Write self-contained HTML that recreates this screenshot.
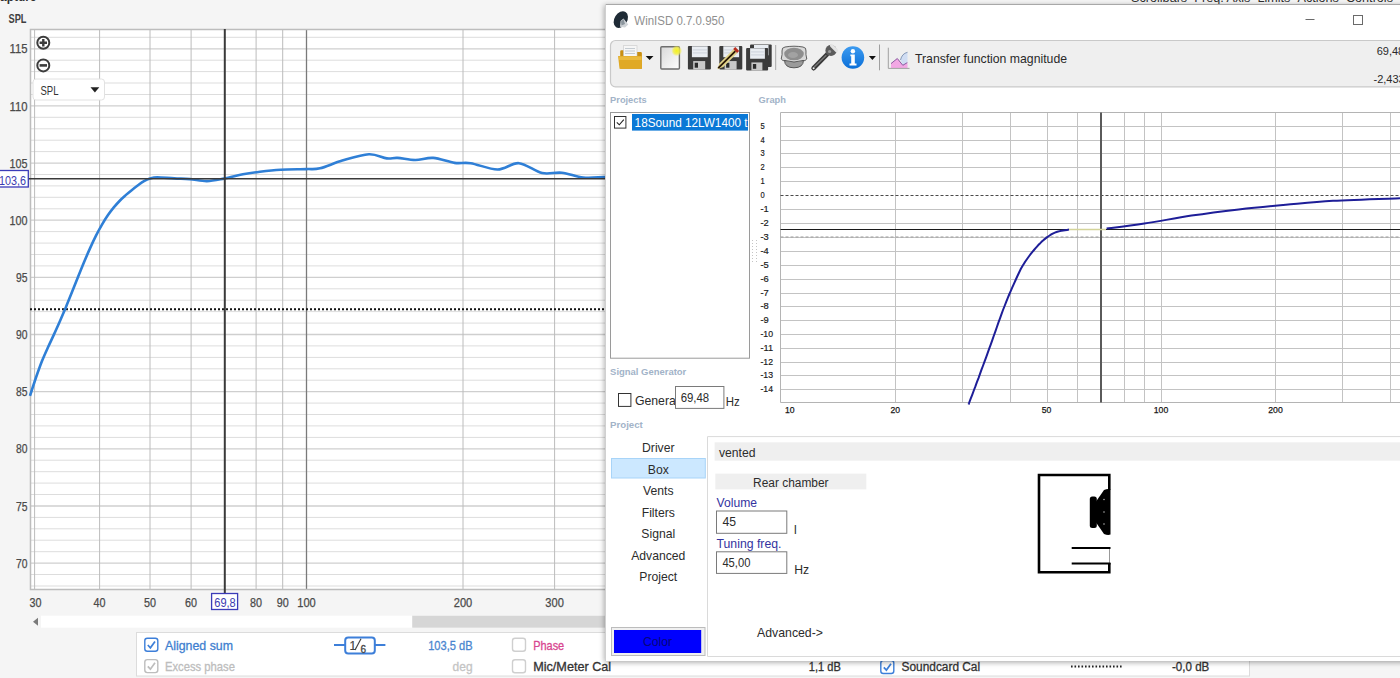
<!DOCTYPE html>
<html><head><meta charset="utf-8"><title>REW + WinISD</title>
<style>
html,body{margin:0;padding:0;width:1400px;height:678px;overflow:hidden;background:#f5f5f5;font-family:"Liberation Sans", sans-serif;}
svg text{font-family:"Liberation Sans", sans-serif;}
</style></head><body>
<svg id="rew" width="1400" height="678" viewBox="0 0 1400 678" style="position:absolute;left:0;top:0"><rect x="30" y="29" width="590" height="561" fill="#fff"/><line x1="30" x2="620" y1="586.0" y2="586.0" stroke="#dddddd" stroke-width="1"/><line x1="30" x2="620" y1="574.5" y2="574.5" stroke="#dddddd" stroke-width="1"/><line x1="30" x2="620" y1="563.1" y2="563.1" stroke="#cfcfcf" stroke-width="1.3"/><line x1="30" x2="620" y1="551.7" y2="551.7" stroke="#dddddd" stroke-width="1"/><line x1="30" x2="620" y1="540.2" y2="540.2" stroke="#dddddd" stroke-width="1"/><line x1="30" x2="620" y1="528.8" y2="528.8" stroke="#dddddd" stroke-width="1"/><line x1="30" x2="620" y1="517.4" y2="517.4" stroke="#dddddd" stroke-width="1"/><line x1="30" x2="620" y1="506.0" y2="506.0" stroke="#cfcfcf" stroke-width="1.3"/><line x1="30" x2="620" y1="494.5" y2="494.5" stroke="#dddddd" stroke-width="1"/><line x1="30" x2="620" y1="483.1" y2="483.1" stroke="#dddddd" stroke-width="1"/><line x1="30" x2="620" y1="471.7" y2="471.7" stroke="#dddddd" stroke-width="1"/><line x1="30" x2="620" y1="460.2" y2="460.2" stroke="#dddddd" stroke-width="1"/><line x1="30" x2="620" y1="448.8" y2="448.8" stroke="#cfcfcf" stroke-width="1.3"/><line x1="30" x2="620" y1="437.4" y2="437.4" stroke="#dddddd" stroke-width="1"/><line x1="30" x2="620" y1="425.9" y2="425.9" stroke="#dddddd" stroke-width="1"/><line x1="30" x2="620" y1="414.5" y2="414.5" stroke="#dddddd" stroke-width="1"/><line x1="30" x2="620" y1="403.1" y2="403.1" stroke="#dddddd" stroke-width="1"/><line x1="30" x2="620" y1="391.7" y2="391.7" stroke="#cfcfcf" stroke-width="1.3"/><line x1="30" x2="620" y1="380.2" y2="380.2" stroke="#dddddd" stroke-width="1"/><line x1="30" x2="620" y1="368.8" y2="368.8" stroke="#dddddd" stroke-width="1"/><line x1="30" x2="620" y1="357.4" y2="357.4" stroke="#dddddd" stroke-width="1"/><line x1="30" x2="620" y1="345.9" y2="345.9" stroke="#dddddd" stroke-width="1"/><line x1="30" x2="620" y1="334.5" y2="334.5" stroke="#cfcfcf" stroke-width="1.3"/><line x1="30" x2="620" y1="323.1" y2="323.1" stroke="#dddddd" stroke-width="1"/><line x1="30" x2="620" y1="311.6" y2="311.6" stroke="#dddddd" stroke-width="1"/><line x1="30" x2="620" y1="300.2" y2="300.2" stroke="#dddddd" stroke-width="1"/><line x1="30" x2="620" y1="288.8" y2="288.8" stroke="#dddddd" stroke-width="1"/><line x1="30" x2="620" y1="277.4" y2="277.4" stroke="#cfcfcf" stroke-width="1.3"/><line x1="30" x2="620" y1="265.9" y2="265.9" stroke="#dddddd" stroke-width="1"/><line x1="30" x2="620" y1="254.5" y2="254.5" stroke="#dddddd" stroke-width="1"/><line x1="30" x2="620" y1="243.1" y2="243.1" stroke="#dddddd" stroke-width="1"/><line x1="30" x2="620" y1="231.6" y2="231.6" stroke="#dddddd" stroke-width="1"/><line x1="30" x2="620" y1="220.2" y2="220.2" stroke="#cfcfcf" stroke-width="1.3"/><line x1="30" x2="620" y1="208.8" y2="208.8" stroke="#dddddd" stroke-width="1"/><line x1="30" x2="620" y1="197.3" y2="197.3" stroke="#dddddd" stroke-width="1"/><line x1="30" x2="620" y1="185.9" y2="185.9" stroke="#dddddd" stroke-width="1"/><line x1="30" x2="620" y1="174.5" y2="174.5" stroke="#dddddd" stroke-width="1"/><line x1="30" x2="620" y1="163.1" y2="163.1" stroke="#cfcfcf" stroke-width="1.3"/><line x1="30" x2="620" y1="151.6" y2="151.6" stroke="#dddddd" stroke-width="1"/><line x1="30" x2="620" y1="140.2" y2="140.2" stroke="#dddddd" stroke-width="1"/><line x1="30" x2="620" y1="128.8" y2="128.8" stroke="#dddddd" stroke-width="1"/><line x1="30" x2="620" y1="117.3" y2="117.3" stroke="#dddddd" stroke-width="1"/><line x1="30" x2="620" y1="105.9" y2="105.9" stroke="#cfcfcf" stroke-width="1.3"/><line x1="30" x2="620" y1="94.5" y2="94.5" stroke="#dddddd" stroke-width="1"/><line x1="30" x2="620" y1="83.0" y2="83.0" stroke="#dddddd" stroke-width="1"/><line x1="30" x2="620" y1="71.6" y2="71.6" stroke="#dddddd" stroke-width="1"/><line x1="30" x2="620" y1="60.2" y2="60.2" stroke="#dddddd" stroke-width="1"/><line x1="30" x2="620" y1="48.8" y2="48.8" stroke="#cfcfcf" stroke-width="1.3"/><line x1="30" x2="620" y1="37.3" y2="37.3" stroke="#dddddd" stroke-width="1"/><line x1="34.6" x2="34.6" y1="29" y2="590" stroke="#bcbcbc" stroke-width="1"/><line x1="99.6" x2="99.6" y1="29" y2="590" stroke="#bcbcbc" stroke-width="1"/><line x1="150.0" x2="150.0" y1="29" y2="590" stroke="#bcbcbc" stroke-width="1"/><line x1="191.1" x2="191.1" y1="29" y2="590" stroke="#bcbcbc" stroke-width="1"/><line x1="256.1" x2="256.1" y1="29" y2="590" stroke="#bcbcbc" stroke-width="1"/><line x1="282.7" x2="282.7" y1="29" y2="590" stroke="#bcbcbc" stroke-width="1"/><line x1="463.0" x2="463.0" y1="29" y2="590" stroke="#bcbcbc" stroke-width="1"/><line x1="554.6" x2="554.6" y1="29" y2="590" stroke="#bcbcbc" stroke-width="1"/><line x1="619.6" x2="619.6" y1="29" y2="590" stroke="#bcbcbc" stroke-width="1"/><line x1="306.5" x2="306.5" y1="29" y2="590" stroke="#7a7a7a" stroke-width="1.3"/><path d="M620 29.5 H30.5 V589.5 H620" fill="none" stroke="#bdbdbd" stroke-width="1.5"/><line x1="30" x2="620" y1="309.3" y2="309.3" stroke="#111" stroke-width="2" stroke-dasharray="2 2"/><path d="M30 395.8 C31.0 392.8 34.0 383.3 36 377.5 C38.0 371.7 40.0 366.0 42 361 C44.0 356.0 46.0 351.7 48 347.3 C50.0 342.9 52.0 338.8 54 334.4 C56.0 330.0 58.0 325.6 60 321.0 C62.0 316.4 64.0 311.7 66 306.9 C68.0 302.1 70.0 297.1 72 292.1 C74.0 287.1 76.0 282.1 78 277.1 C80.0 272.1 82.0 267.1 84 262.3 C86.0 257.5 88.0 252.8 90 248.4 C92.0 244.0 94.0 239.7 96 235.7 C98.0 231.7 100.0 228.0 102 224.6 C104.0 221.2 106.0 218.0 108 215.1 C110.0 212.2 112.0 209.6 114 207.2 C116.0 204.8 118.0 202.6 120 200.5 C122.0 198.4 124.0 196.7 126 194.9 C128.0 193.1 130.0 191.5 132 189.9 C134.0 188.3 136.0 186.8 138 185.3 C140.0 183.8 142.0 182.2 144 181.1 C146.0 180.0 147.8 179.2 150 178.5 C152.2 177.8 153.2 177.2 157.3 177.2 C161.4 177.2 168.9 178.1 174.3 178.4 C179.7 178.7 184.3 178.7 189.7 179.1 C195.1 179.5 201.2 181.2 206.9 181.1 C212.6 181.0 218.0 179.7 224 178.6 C230.0 177.5 236.9 175.5 242.9 174.3 C248.9 173.2 253.7 172.5 260 171.7 C266.3 170.9 272.9 170.1 280.6 169.7 C288.3 169.3 299.7 169.3 306.3 169.1 C312.9 168.9 314.0 169.7 320 168.3 C326.0 166.9 334.2 162.9 342.3 160.6 C350.4 158.3 361.5 154.7 368.9 154.3 C376.3 153.9 382.0 157.8 386.8 158.4 C391.6 159.0 392.7 157.6 397.5 157.9 C402.3 158.2 409.4 160.0 415.4 160 C421.3 160.0 426.7 157.4 433.2 157.9 C439.7 158.4 448.4 162.0 454.6 162.9 C460.9 163.8 463.6 162.1 470.7 163.2 C477.8 164.3 489.5 169.5 497.5 169.5 C505.5 169.5 511.5 162.6 518.9 163.2 C526.3 163.8 535.0 171.4 542.1 173 C549.2 174.6 554.9 171.9 561.8 172.7 C568.6 173.4 576.1 176.8 583.2 177.5 C590.3 178.2 598.5 177.2 604.6 177.1 C610.7 177.0 617.4 177.1 620 177.1" fill="none" stroke="#2f7fd6" stroke-width="2.6" stroke-linejoin="round"/><line x1="27" x2="620" y1="178.8" y2="178.8" stroke="#3a3a3a" stroke-width="1.5"/><line x1="224.8" x2="224.8" y1="29" y2="594" stroke="#3a3a3a" stroke-width="2"/><text x="27.5" y="567.7" font-size="12" fill="#4a4a4a" text-anchor="end" font-weight="normal" stroke="#4a4a4a" stroke-width="0.25" textLength="11.5" lengthAdjust="spacingAndGlyphs">70</text><text x="27.5" y="510.6" font-size="12" fill="#4a4a4a" text-anchor="end" font-weight="normal" stroke="#4a4a4a" stroke-width="0.25" textLength="11.5" lengthAdjust="spacingAndGlyphs">75</text><text x="27.5" y="453.4" font-size="12" fill="#4a4a4a" text-anchor="end" font-weight="normal" stroke="#4a4a4a" stroke-width="0.25" textLength="11.5" lengthAdjust="spacingAndGlyphs">80</text><text x="27.5" y="396.3" font-size="12" fill="#4a4a4a" text-anchor="end" font-weight="normal" stroke="#4a4a4a" stroke-width="0.25" textLength="11.5" lengthAdjust="spacingAndGlyphs">85</text><text x="27.5" y="339.1" font-size="12" fill="#4a4a4a" text-anchor="end" font-weight="normal" stroke="#4a4a4a" stroke-width="0.25" textLength="11.5" lengthAdjust="spacingAndGlyphs">90</text><text x="27.5" y="282.0" font-size="12" fill="#4a4a4a" text-anchor="end" font-weight="normal" stroke="#4a4a4a" stroke-width="0.25" textLength="11.5" lengthAdjust="spacingAndGlyphs">95</text><text x="27.5" y="224.8" font-size="12" fill="#4a4a4a" text-anchor="end" font-weight="normal" stroke="#4a4a4a" stroke-width="0.25" textLength="18" lengthAdjust="spacingAndGlyphs">100</text><text x="27.5" y="167.7" font-size="12" fill="#4a4a4a" text-anchor="end" font-weight="normal" stroke="#4a4a4a" stroke-width="0.25" textLength="18" lengthAdjust="spacingAndGlyphs">105</text><text x="27.5" y="110.5" font-size="12" fill="#4a4a4a" text-anchor="end" font-weight="normal" stroke="#4a4a4a" stroke-width="0.25" textLength="18" lengthAdjust="spacingAndGlyphs">110</text><text x="27.5" y="53.4" font-size="12" fill="#4a4a4a" text-anchor="end" font-weight="normal" stroke="#4a4a4a" stroke-width="0.25" textLength="18" lengthAdjust="spacingAndGlyphs">115</text><text x="35.5" y="607.3" font-size="12" fill="#4a4a4a" text-anchor="middle" font-weight="normal" stroke="#4a4a4a" stroke-width="0.25" textLength="12" lengthAdjust="spacingAndGlyphs">30</text><text x="99.6" y="607.3" font-size="12" fill="#4a4a4a" text-anchor="middle" font-weight="normal" stroke="#4a4a4a" stroke-width="0.25" textLength="12" lengthAdjust="spacingAndGlyphs">40</text><text x="150.0" y="607.3" font-size="12" fill="#4a4a4a" text-anchor="middle" font-weight="normal" stroke="#4a4a4a" stroke-width="0.25" textLength="12" lengthAdjust="spacingAndGlyphs">50</text><text x="191.1" y="607.3" font-size="12" fill="#4a4a4a" text-anchor="middle" font-weight="normal" stroke="#4a4a4a" stroke-width="0.25" textLength="12" lengthAdjust="spacingAndGlyphs">60</text><text x="256.1" y="607.3" font-size="12" fill="#4a4a4a" text-anchor="middle" font-weight="normal" stroke="#4a4a4a" stroke-width="0.25" textLength="12" lengthAdjust="spacingAndGlyphs">80</text><text x="282.7" y="607.3" font-size="12" fill="#4a4a4a" text-anchor="middle" font-weight="normal" stroke="#4a4a4a" stroke-width="0.25" textLength="12" lengthAdjust="spacingAndGlyphs">90</text><text x="306.5" y="607.3" font-size="12" fill="#4a4a4a" text-anchor="middle" font-weight="normal" stroke="#4a4a4a" stroke-width="0.25" textLength="18.5" lengthAdjust="spacingAndGlyphs">100</text><text x="463.0" y="607.3" font-size="12" fill="#4a4a4a" text-anchor="middle" font-weight="normal" stroke="#4a4a4a" stroke-width="0.25" textLength="18.5" lengthAdjust="spacingAndGlyphs">200</text><text x="554.6" y="607.3" font-size="12" fill="#4a4a4a" text-anchor="middle" font-weight="normal" stroke="#4a4a4a" stroke-width="0.25" textLength="18.5" lengthAdjust="spacingAndGlyphs">300</text><rect x="-2" y="170.5" width="30.3" height="16.5" fill="#fff" stroke="#3b3bb8" stroke-width="1.3"/><text x="26" y="184.6" font-size="12" fill="#3b3bb0" text-anchor="end" font-weight="normal"  textLength="27" lengthAdjust="spacingAndGlyphs">103,6</text><rect x="211.6" y="593.5" width="26" height="16" fill="#fff" stroke="#3b3bb8" stroke-width="1.3"/><text x="225" y="606.8" font-size="12" fill="#3b3bb0" text-anchor="middle" font-weight="normal"  textLength="21.5" lengthAdjust="spacingAndGlyphs">69,8</text><text x="8.5" y="22.8" font-size="12" fill="#404040" text-anchor="start" font-weight="bold"  textLength="18" lengthAdjust="spacingAndGlyphs">SPL</text><text x="-8.5" y="0.6" font-size="12" fill="#303030" text-anchor="start" font-weight="bold"  textLength="45" lengthAdjust="spacingAndGlyphs">Capture</text><circle cx="43.3" cy="42.7" r="6" fill="#fff" stroke="#3c3c3c" stroke-width="2"/><path d="M39.6 42.7 H47 M43.3 39 V46.4" stroke="#3c3c3c" stroke-width="2.4"/><circle cx="43.3" cy="65.4" r="6" fill="#fff" stroke="#3c3c3c" stroke-width="2"/><path d="M39.6 65.4 H47" stroke="#3c3c3c" stroke-width="2.6"/><rect x="33" y="79" width="71.5" height="21" rx="3" fill="#fff" stroke="#e2e2e2" stroke-width="1"/><text x="40.5" y="94.5" font-size="12" fill="#333" text-anchor="start" font-weight="normal"  textLength="18" lengthAdjust="spacingAndGlyphs">SPL</text><path d="M90.5 87.3 H99.3 L94.9 92.6 Z" fill="#222"/><rect x="41" y="615.7" width="580" height="12" fill="#fff"/><rect x="412.2" y="615.7" width="210" height="12" fill="#d6d6d6"/><path d="M33 621.8 L38 617.8 V625.8 Z" fill="#7a7a7a"/><rect x="136.5" y="632.5" width="1113" height="43.5" fill="#fff" stroke="#dcdcdc" stroke-width="1"/><rect x="144.8" y="638.2" width="13" height="13" rx="2.5" fill="#fff" stroke="#3d7fd9" stroke-width="1.4"/><path d="M147.8 645.0 L150.4 647.8000000000001 L155.0 641.4000000000001" fill="none" stroke="#3d7fd9" stroke-width="1.7"/><text x="165" y="649.6" font-size="12.4" fill="#3f7fd0" text-anchor="start" font-weight="normal" stroke="#3f7fd0" stroke-width="0.3" textLength="68" lengthAdjust="spacingAndGlyphs">Aligned sum</text><rect x="144.8" y="659.6" width="13" height="13" rx="2.5" fill="#fff" stroke="#bdbdbd" stroke-width="1.4"/><path d="M147.8 666.4 L150.4 669.2 L155.0 662.8000000000001" fill="none" stroke="#bdbdbd" stroke-width="1.7"/><text x="165" y="671" font-size="12.4" fill="#bdbdbd" text-anchor="start" font-weight="normal" stroke="#bdbdbd" stroke-width="0.3" textLength="70" lengthAdjust="spacingAndGlyphs">Excess phase</text><path d="M334 645.1 H345 M375 645.1 H385.4" stroke="#3d7fd9" stroke-width="2"/><rect x="345.2" y="637.6" width="29.6" height="15.8" rx="3" fill="#fff" stroke="#3d7fd9" stroke-width="2"/><text x="349.5" y="649.5" font-size="12" fill="#444" text-anchor="start" font-weight="normal" stroke="#444" stroke-width="0.2" >1</text><path d="M355 650 L361 638.8" stroke="#444" stroke-width="1.2"/><text x="360.5" y="652.8" font-size="10" fill="#444" text-anchor="start" font-weight="normal" stroke="#444" stroke-width="0.3" >6</text><text x="472.6" y="649.5" font-size="12" fill="#4a86cf" text-anchor="end" font-weight="normal" stroke="#4a86cf" stroke-width="0.3" textLength="44.4" lengthAdjust="spacingAndGlyphs">103,5 dB</text><text x="472.6" y="671" font-size="12" fill="#c4c4c4" text-anchor="end" font-weight="normal" stroke="#c4c4c4" stroke-width="0.3" textLength="20" lengthAdjust="spacingAndGlyphs">deg</text><rect x="512.5" y="638.3" width="13" height="13" rx="2.5" fill="#fff" stroke="#cfcfcf" stroke-width="1.4"/><text x="533.2" y="649.5" font-size="12.4" fill="#d8468f" text-anchor="start" font-weight="normal" stroke="#d8468f" stroke-width="0.3" textLength="31" lengthAdjust="spacingAndGlyphs">Phase</text><rect x="512.5" y="659.8" width="13" height="13" rx="2.5" fill="#fff" stroke="#cfcfcf" stroke-width="1.4"/><text x="533.2" y="671" font-size="12.4" fill="#333" text-anchor="start" font-weight="normal" stroke="#333" stroke-width="0.3" textLength="78" lengthAdjust="spacingAndGlyphs">Mic/Meter Cal</text><text x="840.8" y="671" font-size="12" fill="#333" text-anchor="end" font-weight="normal" stroke="#333" stroke-width="0.3" textLength="32" lengthAdjust="spacingAndGlyphs">1,1 dB</text><rect x="880.8" y="660.5" width="13" height="13" rx="2.5" fill="#fff" stroke="#3d7fd9" stroke-width="1.4"/><path d="M883.8 667.3 L886.4 670.1 L891.0 663.7" fill="none" stroke="#3d7fd9" stroke-width="1.7"/><text x="901.6" y="671" font-size="12" fill="#333" text-anchor="start" font-weight="normal" stroke="#333" stroke-width="0.3" textLength="78.5" lengthAdjust="spacingAndGlyphs">Soundcard Cal</text><line x1="1071" x2="1122" y1="666.5" y2="666.5" stroke="#222" stroke-width="1.8" stroke-dasharray="1.6 1.9"/><text x="1209.3" y="671" font-size="12" fill="#333" text-anchor="end" font-weight="normal" stroke="#333" stroke-width="0.3" textLength="37.3" lengthAdjust="spacingAndGlyphs">-0,0 dB</text></svg>
<svg width="1400" height="678" style="position:absolute;left:0;top:0"><text x="1131" y="2.2" font-size="12" fill="#303030" text-anchor="start" font-weight="normal"  textLength="262" lengthAdjust="spacingAndGlyphs">Scrollbars&#160;&#160;Freq. Axis&#160;&#160;Limits&#160;&#160;Actions&#160;&#160;Controls</text></svg>
<div style="position:absolute;left:605px;top:4px;width:900px;height:657px;box-shadow:0 2px 5px rgba(0,0,0,0.25), -2px 0 5px rgba(0,0,0,0.10)"></div>
<svg id="win" width="1400" height="678" viewBox="0 0 1400 678" style="position:absolute;left:0;top:0"><rect x="605" y="4" width="820" height="657" fill="#fff"/><line x1="605" x2="1400" y1="4.5" y2="4.5" stroke="#a8a8a8" stroke-width="1"/><line x1="605.5" x2="605.5" y1="4" y2="661" stroke="#d0d0d0" stroke-width="1"/><ellipse cx="620.8" cy="19.6" rx="6.4" ry="8.9" transform="rotate(32 620.8 19.6)" fill="#1f2b36"/><path d="M620.5 21 L623.5 18.5 L628.3 24.5 L625 27.5 L620 26.8 Z" fill="#d0d4d8"/><path d="M621 21.5 L623.5 19 L625 24 L621.5 25.5 Z" fill="#8a949c"/><text x="634.3" y="24.6" font-size="12" fill="#8f8f8f" text-anchor="start" font-weight="normal"  textLength="90" lengthAdjust="spacingAndGlyphs">WinISD 0.7.0.950</text><line x1="1305.5" x2="1314.5" y1="19.5" y2="19.5" stroke="#6a6a6a" stroke-width="1"/><rect x="1353.5" y="15.5" width="9" height="9" fill="none" stroke="#6a6a6a" stroke-width="1"/><rect x="610.5" y="40.5" width="820" height="46.3" rx="5" fill="#efefef" stroke="#c9c9c9" stroke-width="1.2"/><path d="M620.2 68.7 V51.5 Q620.2 50.3 621.4 50.3 H626 L627.5 52 H640.7 Q641.9 52 641.9 53.2 V68.7 Z" fill="#c98f12"/><rect x="623.6" y="45.7" width="13.4" height="11" fill="#f6f6f6" stroke="#c8c8c8" stroke-width="0.6"/><path d="M625 48.5 H635 M625 51 H635 M625 53.5 H635" stroke="#b8c0c8" stroke-width="0.8"/><path d="M618.1 56 H641.9 V68.7 H619.5 Z" fill="#e0a925"/><path d="M618.6 56.5 H641.5 V60 H619 Z" fill="#ecbe45" opacity="0.8"/><path d="M645.7 56 H653.5 L649.6 60 Z" fill="#111"/><defs><linearGradient id="docg" x1="0" y1="0" x2="1" y2="1"><stop offset="0" stop-color="#d8d8d8"/><stop offset="1" stop-color="#ffffff"/></linearGradient><radialGradient id="glow"><stop offset="0" stop-color="#f4f21a"/><stop offset="0.6" stop-color="#f2ee40" stop-opacity="0.8"/><stop offset="1" stop-color="#f4f060" stop-opacity="0"/></radialGradient><linearGradient id="infog" x1="0" y1="0" x2="0" y2="1"><stop offset="0" stop-color="#3d9bf0"/><stop offset="1" stop-color="#0a6fd8"/></linearGradient></defs><rect x="660.8" y="46.8" width="18.6" height="22.2" rx="1" fill="url(#docg)" stroke="#6e6e6e" stroke-width="1.4"/><circle cx="676.7" cy="50.8" r="5.5" fill="url(#glow)"/><rect x="687.9" y="45.9" width="23" height="23.7" rx="1" fill="#3b3b3b"/><rect x="691.9" y="46.3" width="15.8" height="10.902000000000001" fill="#e9edf2"/><path d="M692.9 49.9 H706.9 M692.9 52.9 H706.9" stroke="#c4ccd6" stroke-width="0.8"/><rect x="693.1999999999999" y="61.068" width="12" height="8.532" fill="#c9c9c9"/><rect x="694.6999999999999" y="62.727" width="3.3" height="4.976999999999999" fill="#2b2b2b"/><rect x="719.3" y="45.9" width="23" height="23.7" rx="1" fill="#3b3b3b"/><rect x="723.3" y="46.3" width="15.8" height="10.902000000000001" fill="#e9edf2"/><path d="M724.3 49.9 H738.3 M724.3 52.9 H738.3" stroke="#c4ccd6" stroke-width="0.8"/><rect x="724.5999999999999" y="61.068" width="12" height="8.532" fill="#c9c9c9"/><rect x="726.0999999999999" y="62.727" width="3.3" height="4.976999999999999" fill="#2b2b2b"/><path d="M717.2 69.2 L719.5 63.3 L733.5 49.3 L737.3 53.1 L723.3 67.1 Z" fill="#e2d48a"/><path d="M718.2 68.2 L735.4 51.2" stroke="#2a1806" stroke-width="1.8"/><path d="M733.2 49 L735.3 47 L739.2 50.9 L737.1 53 Z" fill="#b82c1c"/><rect x="750" y="44.6" width="21.7" height="22.4" rx="1" fill="#3b3b3b"/><rect x="754" y="45.0" width="14.5" height="10.304" fill="#e9edf2"/><path d="M755 48.6 H767.7 M755 51.6 H767.7" stroke="#c4ccd6" stroke-width="0.8"/><rect x="755.3" y="58.936" width="10.7" height="8.064" fill="#c9c9c9"/><rect x="756.8" y="60.504" width="3.3" height="4.704" fill="#2b2b2b"/><rect x="746.1" y="47.9" width="22" height="22.7" rx="1" fill="#3b3b3b"/><rect x="750.1" y="48.3" width="14.8" height="10.442" fill="#e9edf2"/><path d="M751.1 51.9 H764.1 M751.1 54.9 H764.1" stroke="#c4ccd6" stroke-width="0.8"/><rect x="751.4" y="62.428" width="11" height="8.171999999999999" fill="#c9c9c9"/><rect x="752.9" y="64.017" width="3.3" height="4.7669999999999995" fill="#2b2b2b"/><line x1="775.7" x2="775.7" y1="45" y2="70" stroke="#a8a8a8" stroke-width="1"/><path d="M784.5 60 Q784.5 67.8 794 67.8 Q803.5 67.8 803.5 60 Z" fill="#9a9a9a" stroke="#4a4a4a" stroke-width="0.9"/><path d="M782 51 Q781.5 47.5 785 47 Q789 46.3 794 46.2 Q799 46.3 803 47 Q806.5 47.5 806 51 Q805.5 54 806.8 59 Q805 61.5 803 60.5 Q794 63.5 785 60.5 Q783 61.5 781.2 59 Q782.5 54 782 51 Z" fill="#d8d8d8" stroke="#3e3e3e" stroke-width="0.8"/><ellipse cx="794" cy="54" rx="9.8" ry="6.3" fill="#8e8e8e"/><ellipse cx="793" cy="55" rx="5" ry="3" fill="#a2a2a2"/><path d="M813.6 68.2 L827 54.5" stroke="#3a3a3a" stroke-width="4.6" stroke-linecap="round"/><path d="M814.5 66.8 L826 55.5" stroke="#7a7a7a" stroke-width="1.2" stroke-linecap="round"/><circle cx="831" cy="50.4" r="5.6" fill="#5c5c5c"/><path d="M831.5 45.5 L836.5 50.5" stroke="#e4e4e4" stroke-width="3.2" stroke-linecap="round"/><circle cx="829.6" cy="51.5" r="1.6" fill="#9a9a9a"/><circle cx="813.6" cy="68.2" r="1" fill="#f0f0f0"/><circle cx="852.9" cy="57.5" r="11.3" fill="url(#infog)"/><circle cx="852.9" cy="51.3" r="2.2" fill="#fff"/><path d="M850.4 54.5 H854.8 V63.5 H856.5 V65.5 H849.5 V63.5 H851.2 V56.3 H850.4 Z" fill="#fff"/><path d="M868.9 56 H875.9 L872.4 60 Z" fill="#111"/><line x1="879.5" x2="879.5" y1="44.5" y2="70.3" stroke="#a0a0a0" stroke-width="1"/><path d="M891 68 V63.6 L897.3 58.5 L902.8 65.3 L907.5 62.5 V68 Z" fill="#f2a8e4"/><path d="M900.5 60 Q902 53.5 907.5 52.3 V62.5 L902.8 65.3 Z" fill="#c8d8f4" opacity="0.8"/><path d="M891 63.6 L897.3 58.5 L902.8 65.3 L907.3 62.6" stroke="#8a5aa0" stroke-width="1" fill="none"/><path d="M900.5 60 Q902 53.5 907.5 52.3" stroke="#7a90b0" stroke-width="0.9" fill="none"/><path d="M888.3 47.7 V68.4 H909.5" stroke="#a0a0a0" stroke-width="1" fill="none"/><text x="915" y="63.2" font-size="12.2" fill="#2a2a2a" text-anchor="start" font-weight="normal"  textLength="152" lengthAdjust="spacingAndGlyphs">Transfer function magnitude</text><text x="1376.7" y="55.2" font-size="11" fill="#2a2a2a" text-anchor="start" font-weight="normal"  >69,48</text><text x="1373.5" y="82.5" font-size="11" fill="#2a2a2a" text-anchor="start" font-weight="normal"  >-2,433</text><text x="610.1" y="103.1" font-size="9.6" fill="#a2b3c8" text-anchor="start" font-weight="bold"  textLength="36.6" lengthAdjust="spacingAndGlyphs">Projects</text><text x="758.6" y="103.1" font-size="9.6" fill="#a2b3c8" text-anchor="start" font-weight="bold"  textLength="27.4" lengthAdjust="spacingAndGlyphs">Graph</text><text x="610.1" y="374.6" font-size="9.6" fill="#a2b3c8" text-anchor="start" font-weight="bold"  textLength="76.2" lengthAdjust="spacingAndGlyphs">Signal Generator</text><text x="610.1" y="427.7" font-size="9.6" fill="#a2b3c8" text-anchor="start" font-weight="bold"  textLength="32.7" lengthAdjust="spacingAndGlyphs">Project</text><rect x="610.5" y="112.5" width="139" height="245.7" fill="#fff" stroke="#9a9a9a" stroke-width="1"/><rect x="614.5" y="116.5" width="11.4" height="11.6" fill="#fff" stroke="#333" stroke-width="1"/><path d="M616.8 122.3 L619.3 124.8 L623.8 119.6" stroke="#222" stroke-width="1.1" fill="none"/><rect x="632" y="114" width="116" height="16.6" fill="#0a78d6"/><svg x="632" y="112" width="116" height="20"><text x="2.6" y="14.8" font-size="12.5" fill="#fff" textLength="113" lengthAdjust="spacingAndGlyphs">18Sound 12LW1400 t</text></svg><rect x="752" y="240" width="1" height="1" fill="#c4c4c4"/><rect x="756" y="240" width="1" height="1" fill="#c4c4c4"/><rect x="752" y="243" width="1" height="1" fill="#c4c4c4"/><rect x="756" y="243" width="1" height="1" fill="#c4c4c4"/><rect x="752" y="246" width="1" height="1" fill="#c4c4c4"/><rect x="756" y="246" width="1" height="1" fill="#c4c4c4"/><rect x="752" y="249" width="1" height="1" fill="#c4c4c4"/><rect x="756" y="249" width="1" height="1" fill="#c4c4c4"/><rect x="752" y="252" width="1" height="1" fill="#c4c4c4"/><rect x="756" y="252" width="1" height="1" fill="#c4c4c4"/><rect x="752" y="255" width="1" height="1" fill="#c4c4c4"/><rect x="756" y="255" width="1" height="1" fill="#c4c4c4"/><rect x="752" y="258" width="1" height="1" fill="#c4c4c4"/><rect x="756" y="258" width="1" height="1" fill="#c4c4c4"/><rect x="752" y="261" width="1" height="1" fill="#c4c4c4"/><rect x="756" y="261" width="1" height="1" fill="#c4c4c4"/><rect x="780.5" y="112.5" width="640" height="290.0" fill="#fff"/><line x1="780.5" x2="1400" y1="389.5" y2="389.5" stroke="#c3c3c3" stroke-width="1"/><line x1="780.5" x2="1400" y1="375.5" y2="375.5" stroke="#c3c3c3" stroke-width="1"/><line x1="780.5" x2="1400" y1="362.5" y2="362.5" stroke="#c3c3c3" stroke-width="1"/><line x1="780.5" x2="1400" y1="348.5" y2="348.5" stroke="#c3c3c3" stroke-width="1"/><line x1="780.5" x2="1400" y1="334.5" y2="334.5" stroke="#c3c3c3" stroke-width="1"/><line x1="780.5" x2="1400" y1="320.5" y2="320.5" stroke="#c3c3c3" stroke-width="1"/><line x1="780.5" x2="1400" y1="306.5" y2="306.5" stroke="#c3c3c3" stroke-width="1"/><line x1="780.5" x2="1400" y1="293.5" y2="293.5" stroke="#c3c3c3" stroke-width="1"/><line x1="780.5" x2="1400" y1="279.5" y2="279.5" stroke="#c3c3c3" stroke-width="1"/><line x1="780.5" x2="1400" y1="265.5" y2="265.5" stroke="#c3c3c3" stroke-width="1"/><line x1="780.5" x2="1400" y1="251.5" y2="251.5" stroke="#c3c3c3" stroke-width="1"/><line x1="780.5" x2="1400" y1="237.5" y2="237.5" stroke="#c3c3c3" stroke-width="1"/><line x1="780.5" x2="1400" y1="223.5" y2="223.5" stroke="#c3c3c3" stroke-width="1"/><line x1="780.5" x2="1400" y1="209.5" y2="209.5" stroke="#c3c3c3" stroke-width="1"/><line x1="780.5" x2="1400" y1="181.5" y2="181.5" stroke="#c3c3c3" stroke-width="1"/><line x1="780.5" x2="1400" y1="167.5" y2="167.5" stroke="#c3c3c3" stroke-width="1"/><line x1="780.5" x2="1400" y1="153.5" y2="153.5" stroke="#c3c3c3" stroke-width="1"/><line x1="780.5" x2="1400" y1="140.5" y2="140.5" stroke="#c3c3c3" stroke-width="1"/><line x1="780.5" x2="1400" y1="126.5" y2="126.5" stroke="#c3c3c3" stroke-width="1"/><line x1="895.5" x2="895.5" y1="112.5" y2="402.5" stroke="#c3c3c3" stroke-width="1"/><line x1="962.5" x2="962.5" y1="112.5" y2="402.5" stroke="#c3c3c3" stroke-width="1"/><line x1="1010.5" x2="1010.5" y1="112.5" y2="402.5" stroke="#c3c3c3" stroke-width="1"/><line x1="1047.5" x2="1047.5" y1="112.5" y2="402.5" stroke="#c3c3c3" stroke-width="1"/><line x1="1077.5" x2="1077.5" y1="112.5" y2="402.5" stroke="#c3c3c3" stroke-width="1"/><line x1="1124.5" x2="1124.5" y1="112.5" y2="402.5" stroke="#c3c3c3" stroke-width="1"/><line x1="1144.5" x2="1144.5" y1="112.5" y2="402.5" stroke="#c3c3c3" stroke-width="1"/><line x1="1161.5" x2="1161.5" y1="112.5" y2="402.5" stroke="#c3c3c3" stroke-width="1"/><line x1="1275.5" x2="1275.5" y1="112.5" y2="402.5" stroke="#c3c3c3" stroke-width="1"/><line x1="1342.5" x2="1342.5" y1="112.5" y2="402.5" stroke="#c3c3c3" stroke-width="1"/><line x1="1390.5" x2="1390.5" y1="112.5" y2="402.5" stroke="#c3c3c3" stroke-width="1"/><path d="M1400 112.5 H780.5 V402.5 H1400" fill="none" stroke="#b4b4b4" stroke-width="1"/><line x1="780.5" x2="1400" y1="195.5" y2="195.5" stroke="#4a4a4a" stroke-width="1.2" stroke-dasharray="3 2"/><line x1="780.5" x2="1400" y1="237" y2="237" stroke="#9a9a9a" stroke-width="1.2" stroke-dasharray="3 2"/><line x1="780.5" x2="1400" y1="229.5" y2="229.5" stroke="#1a1a1a" stroke-width="1"/><line x1="1101" x2="1101" y1="112.5" y2="402.5" stroke="#5a5a5a" stroke-width="2"/><path d="M968.5 404.5 L968.9 403.6 L969.2 402.7 L970.7 398.7 L972.3 394.6 L973.8 390.5 L975.4 386.4 L976.9 382.2 L978.5 378.1 L980.0 373.9 L981.5 369.7 L983.1 365.5 L984.6 361.3 L986.2 357.1 L987.7 352.9 L989.2 348.7 L990.8 344.4 L992.3 340.1 L993.8 335.7 L995.4 331.3 L996.9 327.0 L998.4 322.6 L1000.0 318.4 L1001.5 314.2 L1003.0 310.0 L1004.6 306.0 L1006.1 302.1 L1007.6 298.3 L1009.2 294.5 L1010.8 290.9 L1012.3 287.4 L1013.9 283.9 L1015.4 280.5 L1017.2 276.5 L1019.1 272.5 L1020.9 268.8 L1022.8 265.5 L1024.4 262.9 L1026.0 260.5 L1027.6 258.2 L1029.2 256.0 L1030.8 253.9 L1032.4 251.9 L1034.0 250.0 L1035.6 248.1 L1037.2 246.3 L1038.8 244.5 L1040.5 242.9 L1042.1 241.3 L1043.7 239.9 L1045.3 238.6 L1046.9 237.4 L1048.5 236.3 L1050.1 235.2 L1051.7 234.2 L1053.3 233.3 L1054.9 232.6 L1056.5 232.0 L1058.2 231.5 L1059.9 231.1 L1061.5 230.8 L1063.2 230.5 L1064.9 230.2 L1067.0 229.9 L1069.0 229.6" fill="none" stroke="#1e1e98" stroke-width="2" stroke-linejoin="round"/><line x1="1069" x2="1106" y1="229.5" y2="229.5" stroke="#d4d49a" stroke-width="1.6"/><path d="M1106.6 228.6 C1112.9 227.8 1130.1 225.8 1144.3 223.6 C1158.5 221.4 1175.8 218.0 1191.5 215.6 C1207.2 213.2 1223.0 211.2 1238.7 209.4 C1254.4 207.6 1270.1 206.1 1285.8 204.7 C1301.5 203.3 1314.0 201.9 1333 200.8 C1352.0 199.7 1388.8 198.7 1400 198.3" fill="none" stroke="#1e1e98" stroke-width="2"/><text x="760.4" y="392.4" font-size="9.9" fill="#1a1a1a" text-anchor="start" font-weight="normal"  stroke="#1a1a1a" stroke-width="0.2" textLength="12.6" lengthAdjust="spacingAndGlyphs">-14</text><text x="760.4" y="378.4" font-size="9.9" fill="#1a1a1a" text-anchor="start" font-weight="normal"  stroke="#1a1a1a" stroke-width="0.2" textLength="12.6" lengthAdjust="spacingAndGlyphs">-13</text><text x="760.4" y="365.4" font-size="9.9" fill="#1a1a1a" text-anchor="start" font-weight="normal"  stroke="#1a1a1a" stroke-width="0.2" textLength="12.6" lengthAdjust="spacingAndGlyphs">-12</text><text x="760.4" y="351.4" font-size="9.9" fill="#1a1a1a" text-anchor="start" font-weight="normal"  stroke="#1a1a1a" stroke-width="0.2" textLength="12.6" lengthAdjust="spacingAndGlyphs">-11</text><text x="760.4" y="337.4" font-size="9.9" fill="#1a1a1a" text-anchor="start" font-weight="normal"  stroke="#1a1a1a" stroke-width="0.2" textLength="12.6" lengthAdjust="spacingAndGlyphs">-10</text><text x="760.4" y="323.4" font-size="9.9" fill="#1a1a1a" text-anchor="start" font-weight="normal"  stroke="#1a1a1a" stroke-width="0.2" textLength="8.3" lengthAdjust="spacingAndGlyphs">-9</text><text x="760.4" y="309.4" font-size="9.9" fill="#1a1a1a" text-anchor="start" font-weight="normal"  stroke="#1a1a1a" stroke-width="0.2" textLength="8.3" lengthAdjust="spacingAndGlyphs">-8</text><text x="760.4" y="296.4" font-size="9.9" fill="#1a1a1a" text-anchor="start" font-weight="normal"  stroke="#1a1a1a" stroke-width="0.2" textLength="8.3" lengthAdjust="spacingAndGlyphs">-7</text><text x="760.4" y="282.4" font-size="9.9" fill="#1a1a1a" text-anchor="start" font-weight="normal"  stroke="#1a1a1a" stroke-width="0.2" textLength="8.3" lengthAdjust="spacingAndGlyphs">-6</text><text x="760.4" y="268.4" font-size="9.9" fill="#1a1a1a" text-anchor="start" font-weight="normal"  stroke="#1a1a1a" stroke-width="0.2" textLength="8.3" lengthAdjust="spacingAndGlyphs">-5</text><text x="760.4" y="254.4" font-size="9.9" fill="#1a1a1a" text-anchor="start" font-weight="normal"  stroke="#1a1a1a" stroke-width="0.2" textLength="8.3" lengthAdjust="spacingAndGlyphs">-4</text><text x="760.4" y="240.4" font-size="9.9" fill="#1a1a1a" text-anchor="start" font-weight="normal"  stroke="#1a1a1a" stroke-width="0.2" textLength="8.3" lengthAdjust="spacingAndGlyphs">-3</text><text x="760.4" y="226.4" font-size="9.9" fill="#1a1a1a" text-anchor="start" font-weight="normal"  stroke="#1a1a1a" stroke-width="0.2" textLength="8.3" lengthAdjust="spacingAndGlyphs">-2</text><text x="760.4" y="212.4" font-size="9.9" fill="#1a1a1a" text-anchor="start" font-weight="normal"  stroke="#1a1a1a" stroke-width="0.2" textLength="8.3" lengthAdjust="spacingAndGlyphs">-1</text><text x="760.4" y="198.4" font-size="9.9" fill="#1a1a1a" text-anchor="start" font-weight="normal"  stroke="#1a1a1a" stroke-width="0.2" textLength="4.2" lengthAdjust="spacingAndGlyphs">0</text><text x="760.4" y="184.4" font-size="9.9" fill="#1a1a1a" text-anchor="start" font-weight="normal"  stroke="#1a1a1a" stroke-width="0.2" textLength="4.2" lengthAdjust="spacingAndGlyphs">1</text><text x="760.4" y="170.4" font-size="9.9" fill="#1a1a1a" text-anchor="start" font-weight="normal"  stroke="#1a1a1a" stroke-width="0.2" textLength="4.2" lengthAdjust="spacingAndGlyphs">2</text><text x="760.4" y="156.4" font-size="9.9" fill="#1a1a1a" text-anchor="start" font-weight="normal"  stroke="#1a1a1a" stroke-width="0.2" textLength="4.2" lengthAdjust="spacingAndGlyphs">3</text><text x="760.4" y="143.4" font-size="9.9" fill="#1a1a1a" text-anchor="start" font-weight="normal"  stroke="#1a1a1a" stroke-width="0.2" textLength="4.2" lengthAdjust="spacingAndGlyphs">4</text><text x="760.4" y="129.4" font-size="9.9" fill="#1a1a1a" text-anchor="start" font-weight="normal"  stroke="#1a1a1a" stroke-width="0.2" textLength="4.2" lengthAdjust="spacingAndGlyphs">5</text><text x="789.8" y="412.6" font-size="9.8" fill="#151515" text-anchor="middle" font-weight="normal"  stroke="#151515" stroke-width="0.25" textLength="9.6" lengthAdjust="spacingAndGlyphs">10</text><text x="895.3" y="412.6" font-size="9.8" fill="#151515" text-anchor="middle" font-weight="normal"  stroke="#151515" stroke-width="0.25" textLength="9.6" lengthAdjust="spacingAndGlyphs">20</text><text x="1046.5" y="412.6" font-size="9.8" fill="#151515" text-anchor="middle" font-weight="normal"  stroke="#151515" stroke-width="0.25" textLength="9.6" lengthAdjust="spacingAndGlyphs">50</text><text x="1161.0" y="412.6" font-size="9.8" fill="#151515" text-anchor="middle" font-weight="normal"  stroke="#151515" stroke-width="0.25" textLength="14.5" lengthAdjust="spacingAndGlyphs">100</text><text x="1275.5" y="412.6" font-size="9.8" fill="#151515" text-anchor="middle" font-weight="normal"  stroke="#151515" stroke-width="0.25" textLength="14.5" lengthAdjust="spacingAndGlyphs">200</text><rect x="618.5" y="393.5" width="12.4" height="12.9" fill="#fff" stroke="#333" stroke-width="1"/><text x="634.9" y="404.7" font-size="12.4" fill="#2c2c2c" text-anchor="start" font-weight="normal"  textLength="41" lengthAdjust="spacingAndGlyphs">Genera</text><rect x="675.5" y="386.5" width="48.4" height="21.9" fill="#fff" stroke="#7a7a7a" stroke-width="1"/><text x="680.7" y="401.8" font-size="12.4" fill="#2c2c2c" text-anchor="start" font-weight="normal"  textLength="28.5" lengthAdjust="spacingAndGlyphs">69,48</text><text x="725.8" y="406.4" font-size="12.4" fill="#2c2c2c" text-anchor="start" font-weight="normal"  textLength="14" lengthAdjust="spacingAndGlyphs">Hz</text><rect x="611.5" y="458.5" width="93.8" height="19.5" fill="#cce8ff" stroke="#a8d4f8" stroke-width="1"/><text x="658.3" y="452.1" font-size="12.2" fill="#2c2c2c" text-anchor="middle" font-weight="normal"  >Driver</text><text x="658.3" y="473.7" font-size="12.2" fill="#2c2c2c" text-anchor="middle" font-weight="normal"  >Box</text><text x="658.3" y="495.2" font-size="12.2" fill="#2c2c2c" text-anchor="middle" font-weight="normal"  >Vents</text><text x="658.3" y="516.8" font-size="12.2" fill="#2c2c2c" text-anchor="middle" font-weight="normal"  >Filters</text><text x="658.3" y="538.3" font-size="12.2" fill="#2c2c2c" text-anchor="middle" font-weight="normal"  >Signal</text><text x="658.3" y="559.9" font-size="12.2" fill="#2c2c2c" text-anchor="middle" font-weight="normal"  >Advanced</text><text x="658.3" y="581.4" font-size="12.2" fill="#2c2c2c" text-anchor="middle" font-weight="normal"  >Project</text><rect x="611.5" y="627.5" width="93.5" height="28" fill="#f0f0f0" stroke="#bcbcbc" stroke-width="1"/><rect x="614" y="630" width="87.2" height="23" fill="#0000fe"/><text x="657.6" y="646.3" font-size="12.2" fill="#06067a" text-anchor="middle" font-weight="normal"  >Color</text><path d="M1400 656.5 H707.5 V436.6 H1400" fill="none" stroke="#dadada" stroke-width="1"/><rect x="714.6" y="442.3" width="700" height="18.4" fill="#efefef"/><text x="718.9" y="457.1" font-size="12.2" fill="#2c2c2c" text-anchor="start" font-weight="normal"  >vented</text><rect x="715.3" y="473.6" width="151" height="15.8" fill="#efefef"/><text x="790.8" y="486.6" font-size="12" fill="#2c2c2c" text-anchor="middle" font-weight="normal"  textLength="75.5" lengthAdjust="spacingAndGlyphs">Rear chamber</text><text x="716.5" y="507.4" font-size="12.2" fill="#3333a0" text-anchor="start" font-weight="normal"  textLength="40.5" lengthAdjust="spacingAndGlyphs">Volume</text><rect x="716.5" y="511" width="70.3" height="22.3" fill="#fff" stroke="#7a7a7a" stroke-width="1"/><text x="722.4" y="526.3" font-size="12.2" fill="#2c2c2c" text-anchor="start" font-weight="normal"  >45</text><text x="794" y="533.8" font-size="12.2" fill="#2c2c2c" text-anchor="start" font-weight="normal"  >l</text><text x="716.5" y="548" font-size="12.2" fill="#3333a0" text-anchor="start" font-weight="normal"  textLength="65" lengthAdjust="spacingAndGlyphs">Tuning freq.</text><rect x="716.5" y="551.8" width="70.3" height="21.6" fill="#fff" stroke="#7a7a7a" stroke-width="1"/><text x="722.4" y="567" font-size="12.2" fill="#2c2c2c" text-anchor="start" font-weight="normal"  textLength="28" lengthAdjust="spacingAndGlyphs">45,00</text><text x="794.3" y="573.9" font-size="12.2" fill="#2c2c2c" text-anchor="start" font-weight="normal"  >Hz</text><text x="757" y="637.3" font-size="12.2" fill="#2c2c2c" text-anchor="start" font-weight="normal"  textLength="66" lengthAdjust="spacingAndGlyphs">Advanced-&gt;</text><path d="M1109.3 490 V475 H1039 V572.2 H1109.3 V563" fill="none" stroke="#000" stroke-width="2.6"/><line x1="1109.5" x2="1109.5" y1="548" y2="563" stroke="#999" stroke-width="1"/><line x1="1071.7" x2="1110.5" y1="548" y2="548" stroke="#000" stroke-width="2"/><line x1="1071.7" x2="1110.5" y1="563.6" y2="563.6" stroke="#000" stroke-width="2"/><rect x="1089.8" y="496.4" width="7" height="31.6" rx="2.5" fill="#000"/><path d="M1095 503 L1104 490 Q1108 488.5 1110.5 489.5 V534.5 Q1108 535.5 1104 534 L1095 521 Z" fill="#000"/><circle cx="1104" cy="499.5" r="0.8" fill="#aaa"/><circle cx="1104" cy="512" r="0.8" fill="#aaa"/><circle cx="1104" cy="524" r="0.8" fill="#aaa"/></svg>
</body></html>
